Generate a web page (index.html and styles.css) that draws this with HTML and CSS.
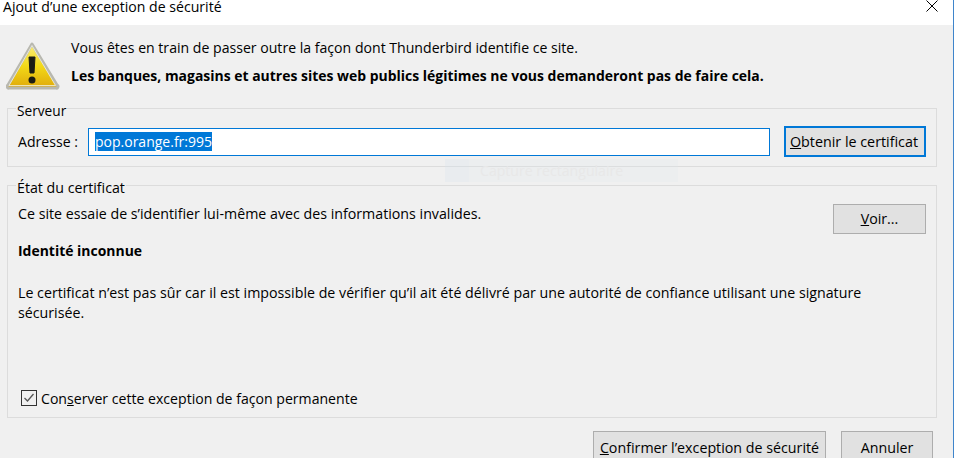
FILE: index.html
```html
<!DOCTYPE html>
<html lang="fr">
<head>
    <meta charset="UTF-8">
    <title>Ajout d’une exception de sécurité</title>
    <link rel="stylesheet" href="styles.css">
</head>
<body>
    <div class="window">
        <div class="titlebar">
            <span class="title">Ajout d’une exception de sécurité</span>
            <svg class="close" width="12" height="12" viewBox="0 0 12 12">
                <path d="M.5.5l11 11M11.5.5l-11 11" stroke="#000" fill="none"/>
            </svg>
        </div>
        <div class="content">
            <div class="warning">
                <svg class="warning-icon" width="54" height="50" viewBox="0 0 54 50">
                    <defs>
                        <linearGradient id="yellow" x1="0" y1="0" x2="0" y2="1">
                            <stop offset="0" stop-color="#fbee7c"/>
                            <stop offset="0.5" stop-color="#f3d917"/>
                            <stop offset="1" stop-color="#dfa90c"/>
                        </linearGradient>
                    </defs>
                    <path d="M26 3L51 44a1.5 1.5 0 0 1-1.5 3H3.5a1.5 1.5 0 0 1-1.5-3z" fill="url(#yellow)" stroke="#b8b8b0" stroke-width="3" stroke-linejoin="round"/>
                    <path d="M26 4.500L49.500 44.500H3z" fill="none" stroke="#f1f1e6" stroke-width=".8"/>
                    <path d="M23 16h6l-1 16h-4z" fill="#1c1c14" stroke="#1c1c14" stroke-linejoin="round"/>
                    <circle cx="26" cy="39" r="3.500" fill="#1c1c14"/>
                </svg>
                <div class="warning-text">
                    <p>Vous êtes en train de passer outre la façon dont Thunderbird identifie ce site.</p>
                    <p class="strong">Les banques, magasins et autres sites web publics légitimes ne vous demanderont pas de faire cela.</p>
                </div>
            </div>

            <fieldset class="group server">
                <legend>Serveur</legend>
                <div class="server-row">
                    <label class="address-label">Adresse :</label>
                    <div class="address"><span class="selected">pop.orange.fr:995</span></div>
                    <button class="button focused"><u>O</u>btenir le certificat</button>
                </div>
            </fieldset>

            <fieldset class="group status">
                <legend>État du certificat</legend>
                <div class="status-top">
                    <p>Ce site essaie de s’identifier lui-même avec des informations invalides.</p>
                    <button class="button view"><u>V</u>oir...</button>
                </div>
                <p class="strong identity">Identité inconnue</p>
                <p class="details">Le certificat n’est pas sûr car il est impossible de vérifier qu’il ait été délivré par une autorité de confiance utilisant une signature sécurisée.</p>
                <div class="keep">
                    <svg class="checkbox" width="16" height="16" viewBox="0 0 16 16">
                        <rect x=".5" y=".5" width="15" height="15" fill="none" stroke="#333"/>
                        <path d="M3.500 8l3 3 6-7" fill="none" stroke="#555" stroke-width="1.300"/>
                    </svg>
                    <span>Con<u>s</u>erver cette exception de façon permanente</span>
                </div>
            </fieldset>

            <div class="actions">
                <button class="button confirm"><u>C</u>onfirmer l’exception de sécurité</button>
                <button class="button cancel">Annuler</button>
            </div>
        </div>

        <!-- vignette d'une autre fenetre, presque transparente -->
        <div class="ghost">
            <span class="ghost-icon"></span>
            <span class="ghost-label">Capture rectangulaire</span>
        </div>
    </div>
</body>
</html>
```

FILE: styles.css
```css
html, body {
    margin: 0;
    padding: 0;
    height: 458px;
    overflow: hidden;
}

body {
    background-color: #fff;
    color: #000;
    font-family: 'Open Sans', sans-serif;
    font-size: 14.1px;
    line-height: 20px;
}

p {
    margin: 0;
}

.window {
    position: relative;
    width: 953px;
    height: 458px;
    overflow: hidden;
    border-right: 1px solid #3f85cb;
    display: flex;
    flex-direction: column;
}

.titlebar {
    height: 25px;
    flex: none;
    display: flex;
    justify-content: space-between;
    background-color: #fff;
    padding: 0 15px 0 3px;
}

.title {
    line-height: 14px;
}

.content {
    flex: 1;
    background-color: #f0f0f0;
    padding: 0 16px 0 7px;
}

.warning {
    display: flex;
    height: 70px;
}

.warning-icon {
    flex: none;
    margin: 16px 11px 0 -1px;
}

.warning-text {
    padding-top: 13px;
}

.warning-text p + p {
    margin-top: 8px;
}

.strong {
    font-weight: bold;
    font-size: 13.96px;
}

.group {
    margin: 0;
    padding: 0 10px;
    border: 1px solid #dcdcdc;
    min-width: 0;
    box-sizing: border-box;
}

.group legend {
    margin-left: -2px;
    padding: 6px 1px 0;
    line-height: 20px;
}

.server {
    height: 72px;
}

.server legend {
    font-size: 13.7px;
}

.server-row {
    display: flex;
    align-items: center;
    height: 31px;
    margin-top: 5px;
}

.address-label {
    width: 70px;
    flex: none;
}

.address {
    flex: none;
    width: 674px;
    height: 26px;
    border: 1px solid #0078d7;
    background-color: #fff;
    padding-left: 6px;
    display: flex;
    align-items: center;
}

.selected {
    background-color: #0078d7;
    color: #fff;
    line-height: 19px;
    font-size: 14px;
}

.button {
    font-family: inherit;
    font-size: 14.25px;
    line-height: 20px;
    color: #000;
    background-color: #e1e1e1;
    border: 1px solid #adadad;
    padding: 0;
    box-sizing: border-box;
}

.focused {
    width: 142px;
    height: 31px;
    margin-left: 14px;
    border: 2px solid #0078d7;
    padding-right: 2px;
    font-size: 14.3px;
}

.status {
    height: 246px;
    margin-top: 5px;
    font-size: 14.23px;
}

.status legend {
    font-size: 14.2px;
}

.status-top {
    display: flex;
    justify-content: space-between;
    margin-top: 6px;
    height: 30px;
}

.view {
    width: 93px;
    height: 30px;
}

.identity {
    margin-top: 7px;
}

.details {
    margin-top: 22px;
    width: 880px;
}

.keep {
    display: flex;
    align-items: center;
    margin-top: 66px;
    margin-left: 3px;
    font-size: 14.1px;
}

.checkbox {
    flex: none;
    margin: -2px 4px 0 0;
}

.actions {
    display: flex;
    justify-content: flex-end;
    gap: 15px;
    margin-top: 13px;
    padding-right: 4px;
}

.confirm {
    width: 233px;
    height: 34px;
    flex: none;
}

.cancel {
    width: 92px;
    height: 34px;
    flex: none;
}

.ghost {
    position: absolute;
    left: 445px;
    top: 159px;
    width: 233px;
    height: 23px;
    display: flex;
    align-items: center;
    background-color: rgba(225, 232, 238, 0.22);
}

.ghost-icon {
    width: 24px;
    height: 23px;
    background-color: rgba(205, 225, 242, 0.1);
}

.ghost-label {
    margin-left: 11px;
    color: #e8e8e8;
}
```
